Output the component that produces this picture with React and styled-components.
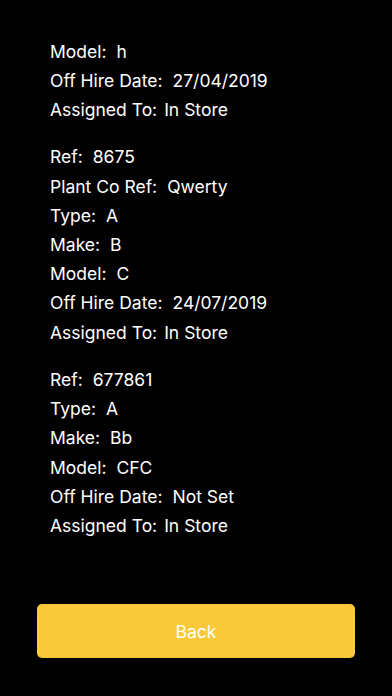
import React from "react";
import styled, { createGlobalStyle } from "styled-components";

const items = [
  [
    ["Model:", "h"],
    ["Off Hire Date:", "27/04/2019"],
    ["Assigned To:", "In Store"],
  ],
  [
    ["Ref:", "8675"],
    ["Plant Co Ref:", "Qwerty"],
    ["Type:", "A"],
    ["Make:", "B"],
    ["Model:", "C"],
    ["Off Hire Date:", "24/07/2019"],
    ["Assigned To:", "In Store"],
  ],
  [
    ["Ref:", "677861"],
    ["Type:", "A"],
    ["Make:", "Bb"],
    ["Model:", "CFC"],
    ["Off Hire Date:", "Not Set"],
    ["Assigned To:", "In Store"],
  ],
];

const App = () => {
  return (
    <Screen>
      <GlobalStyle />
      <List>
        {items.map((group, i) => (
          <Group key={i}>
            {group.map(([label, value], j) => (
              <Row key={j}>
                <Label $tight={label === "Assigned To:"}>{label}</Label>
                <Value>{value}</Value>
              </Row>
            ))}
          </Group>
        ))}
      </List>
      <Footer>
        <BackButton>Back</BackButton>
      </Footer>
    </Screen>
  );
};

export default App;

const GlobalStyle = createGlobalStyle`
  html, body {
    margin: 0;
    padding: 0;
    background: #000;
  }
`;

const Screen = styled.div`
  width: 392px;
  height: 696px;
  background-color: #000;
  display: flex;
  flex-direction: column;
  overflow: hidden;
  font-family: Inter, "Liberation Sans", sans-serif;
`;

const List = styled.div`
  flex: 1;
  display: flex;
  flex-direction: column;
  gap: 18.3px;
  padding: 36.6px 0 0 50px;
`;

const Group = styled.div`
  display: flex;
  flex-direction: column;
`;

const Row = styled.div`
  display: flex;
  align-items: baseline;
  height: 29.2px;
  line-height: 29.2px;
  font-size: 17.5px;
  color: #fff;
`;

const Label = styled.span`
  margin-right: ${(p) => (p.$tight ? "7px" : "10px")};
`;

const Value = styled.span``;

const Footer = styled.div`
  padding: 0 37px 38px 37px;
`;

const BackButton = styled.button`
  width: 100%;
  height: 54px;
  border: none;
  border-radius: 5px;
  background-color: #f9c93a;
  color: #fff;
  font-family: Inter, "Liberation Sans", sans-serif;
  font-size: 17.5px;
  padding: 0;
`;
